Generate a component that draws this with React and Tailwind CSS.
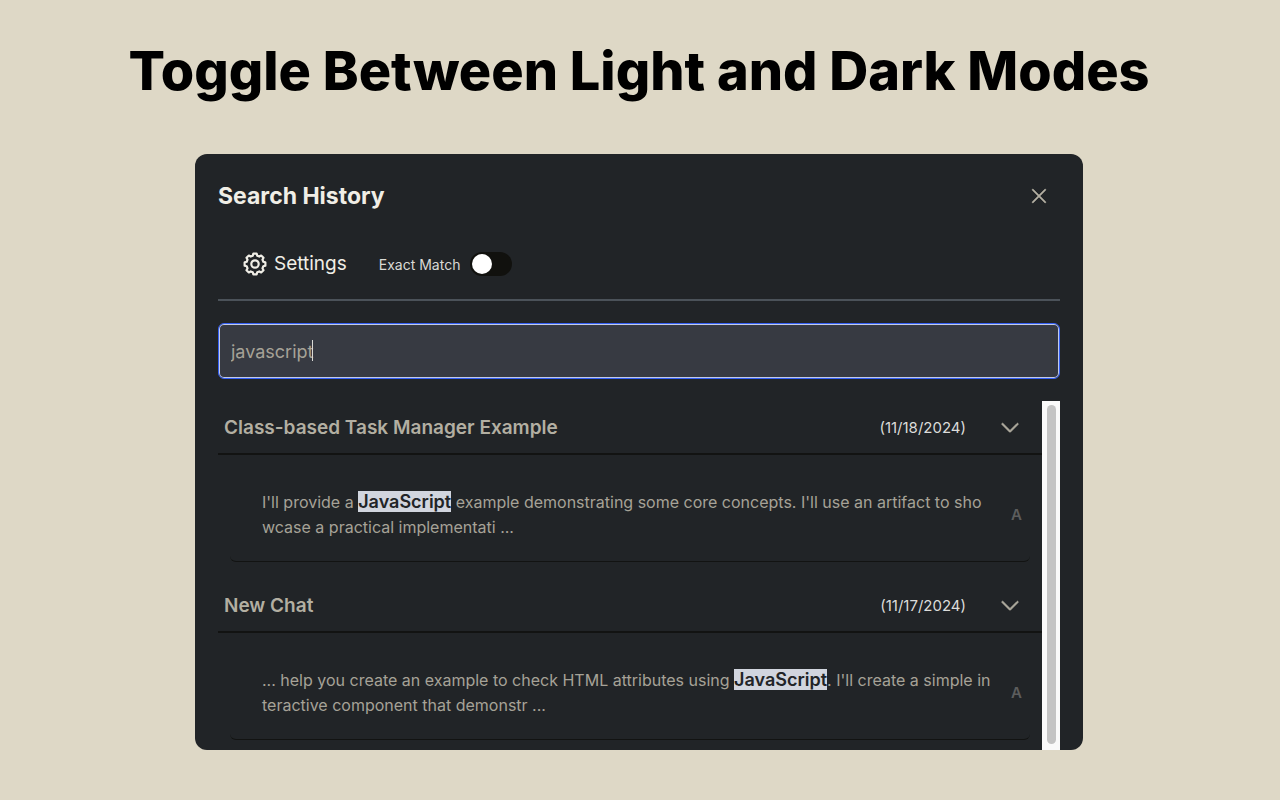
import React, { useState } from 'react';
import { PiX, PiCaretDown } from 'react-icons/pi';

const results = [
  {
    id: 1,
    title: 'Class-based Task Manager Example',
    date: '(11/18/2024)',
    before: "I'll provide a ",
    match: 'JavaScript',
    after: " example demonstrating some core concepts. I'll use an artifact to sho",
    rest: 'wcase a practical implementati ...',
  },
  {
    id: 2,
    title: 'New Chat',
    date: '(11/17/2024)',
    before: '... help you create an example to check HTML attributes using ',
    match: 'JavaScript',
    after: ". I'll create a simple in",
    rest: 'teractive component that demonstr ...',
  },
];

// eight teeth: inner, outer, outer, inner corner for each
const gearPoints = Array.from({ length: 8 }, (_, i) => i * 45)
  .flatMap((deg) => [[deg - 15, 8.6], [deg - 9, 10.5], [deg + 9, 10.5], [deg + 15, 8.6]])
  .map(([deg, r]) => {
    const a = (deg * Math.PI) / 180;
    return `${(12 + r * Math.cos(a)).toFixed(2)},${(12 + r * Math.sin(a)).toFixed(2)}`;
  })
  .join(' ');

const GearIcon = () => (
  <svg width="24" height="24" viewBox="0 0 24 24" fill="none" stroke="currentColor" strokeWidth="2.2" strokeLinejoin="round" aria-hidden="true">
    <polygon points={gearPoints} />
    <circle cx="12" cy="12" r="3.7" />
  </svg>
);

const ResultItem = ({ item }) => (
  <li>
    <div className="flex h-[54px] items-center border-b-2 border-[#121312] pl-1.5 pr-5">
      <h3 className="flex-1 pt-0.5 text-[19px] font-semibold text-[#b3afa2]">{item.title}</h3>
      <span className="pt-0.5 text-[15px] text-[#dcdcda]">{item.date}</span>
      <button type="button" aria-label={`Expand ${item.title}`} className="ml-8 text-[#b3afa2]">
        <PiCaretDown size={24} strokeWidth={8} />
      </button>
    </div>
    <div className="ml-3 mr-3 flex h-[107px] items-center rounded-md border-b border-[#121312] pl-8 pr-2 pt-3.5">
      <p className="min-w-0 flex-1 whitespace-nowrap text-[16px] leading-[25px] text-[#a6a297]">
        {item.before}
        <mark className="bg-[#d1d5de] text-[18px] leading-none font-semibold text-[#212427]">{item.match}</mark>
        {item.after}
        <br />
        {item.rest}
      </p>
      <span className="text-[15px] font-semibold text-[#5c5d5d]">A</span>
    </div>
  </li>
);

const SearchDialog = () => {
  const [query, setQuery] = useState('javascript');
  const [exact, setExact] = useState(false);

  return (
    <section className="mx-auto w-full max-w-[888px] overflow-hidden rounded-xl bg-[#212427] px-[23px] pt-6">
      <header className="flex h-9 items-center justify-between pr-2.5">
        <h2 className="text-[23px] font-bold text-[#f0eee6]">Search History</h2>
        <button type="button" aria-label="Close" className="text-[#b3afa2]">
          <PiX size={22} strokeWidth={6} />
        </button>
      </header>

      <div className="mt-[15px] flex h-[72px] items-center border-b-2 border-[#4b5259] pl-[25px]">
        <button type="button" className="flex items-center gap-[7px] text-[19px] text-[#f0eee6]">
          <GearIcon />
          Settings
        </button>
        <label htmlFor="exact" className="ml-8 text-[14px] text-[#d9d9d5]">Exact Match</label>
        <input
          id="exact"
          type="checkbox"
          checked={exact}
          onChange={(e) => setExact(e.target.checked)}
          className="ml-2.5 flex h-6 w-[42px] appearance-none items-center rounded-full bg-[#11110e] px-0.5 before:size-5 before:rounded-full before:bg-white checked:justify-end"
        />
      </div>

      <div className="relative mt-[22px]">
        <input
          type="text"
          aria-label="Search history"
          value={query}
          onChange={(e) => setQuery(e.target.value)}
          className="block h-14 w-full rounded-md border border-[#3560f5] bg-[#373a42] px-3 text-[18px] text-[#a6a297] inset-ring-1 inset-ring-[#c3cbe6] outline-none"
        />
        <span className="absolute top-[17px] left-[94px] h-[21px] w-px bg-[#d9d9d5]" />
      </div>

      <div className="mt-[22px] flex">
        <ul className="flex min-w-0 flex-1 flex-col gap-[17px] pb-2.5">
          {results.map((item) => (
            <ResultItem key={item.id} item={item} />
          ))}
        </ul>
        <div className="flex w-[18px] justify-center bg-[#fafafa] pt-1 pb-1.5">
          <div className="w-[9px] rounded-full bg-[#c4c4c4]" />
        </div>
      </div>
    </section>
  );
};

export default function App() {
  return (
    <main className="min-h-screen bg-[#ded8c6] pr-[26px] pb-10 pl-6 font-['Inter',sans-serif]">
      <h1 className="flex h-[154px] items-start justify-center pt-9 text-center text-[54px] leading-[70px] font-extrabold text-black">
        Toggle Between Light and Dark Modes
      </h1>
      <SearchDialog />
    </main>
  );
}
